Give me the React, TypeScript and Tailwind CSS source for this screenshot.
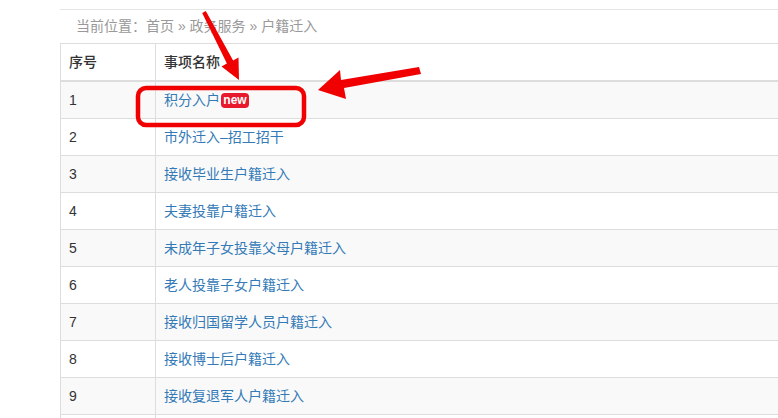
import React from "react";

const rows = [
  "积分入户",
  "市外迁入–招工招干",
  "接收毕业生户籍迁入",
  "夫妻投靠户籍迁入",
  "未成年子女投靠父母户籍迁入",
  "老人投靠子女户籍迁入",
  "接收归国留学人员户籍迁入",
  "接收博士后户籍迁入",
  "接收复退军人户籍迁入",
];

export default function App() {
  return (
    <div
      className="relative w-[778px] h-[418px] overflow-hidden bg-white text-[14px] text-[#333]"
      style={{ fontFamily: '"Liberation Sans", "Noto Sans CJK SC", sans-serif' }}
    >
      <div className="ml-[60px] w-[740px] pt-[9px]">
        <div className="border-t border-[#e5e5e5] h-[34px] flex items-center pl-4 text-[#999]">
          当前位置：首页 » 政务服务 » 户籍迁入
        </div>
        <table className="w-full border-collapse border border-[#ddd]">
          <thead>
            <tr>
              <th className="w-[95px] text-left font-medium px-2 py-2 leading-5 border-r border-[#ddd] border-b-2">
                序号
              </th>
              <th className="text-left font-medium px-2 py-2 leading-5 border-b-2 border-[#ddd]">
                事项名称
              </th>
            </tr>
          </thead>
          <tbody>
            {rows.map((name, i) => (
              <tr key={i} className={i % 2 === 0 ? "bg-[#f9f9f9]" : "bg-white"}>
                <td className="px-2 py-2 leading-5 border-t border-r border-[#ddd]">{i + 1}</td>
                <td className="px-2 py-2 leading-5 border-t border-[#ddd]">
                  <span className="inline-flex items-center">
                    <a className="text-[#337ab7]">{name}</a>
                    {i === 0 && (
                      <span className="ml-[1px] inline-flex items-center justify-center h-[15px] w-[28px] rounded-[4px] bg-[#e8192c] text-white text-[12px] leading-none font-bold">
                        new
                      </span>
                    )}
                  </span>
                </td>
              </tr>
            ))}
            <tr className="bg-white">
              <td className="h-[36px] border-t border-r border-[#ddd]"></td>
              <td className="h-[36px] border-t border-[#ddd]"></td>
            </tr>
          </tbody>
        </table>
      </div>

      <svg
        className="absolute inset-0 pointer-events-none"
        width="778"
        height="418"
        viewBox="0 0 778 418"
      >
        <rect
          x="138"
          y="88"
          width="166"
          height="37"
          rx="8"
          ry="8"
          fill="none"
          stroke="#f00000"
          strokeWidth="4.5"
        />
        <polygon
          points="202.2,12.9 205.8,11.1 233.1,60.4 238.5,57.6 239,80 221.5,66.4 226.9,63.6"
          fill="#f00000"
        />
        <polygon
          points="419,67 421,74 344,88 346,99 318,90 340,70 341,80"
          fill="#f00000"
        />
      </svg>
    </div>
  );
}
